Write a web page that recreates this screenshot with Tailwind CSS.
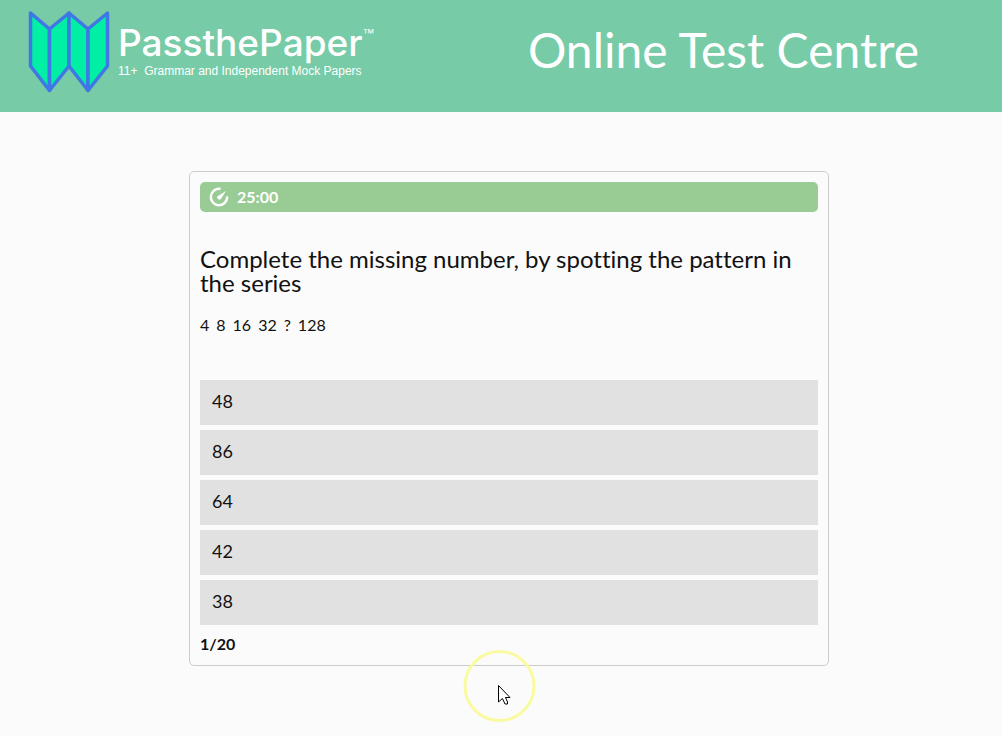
<!DOCTYPE html>
<html lang="en">
<head>
    <meta charset="UTF-8">
    <meta name="viewport" content="width=device-width, initial-scale=1.0">
    <title>PassthePaper - Online Test Centre</title>
    <script src="https://cdn.jsdelivr.net/npm/@tailwindcss/browser@4"></script>
</head>
<body class="relative min-h-screen bg-[#fbfbfb] font-['Lato',sans-serif] text-[#111] [font-variant-ligatures:none]">

    <header class="flex h-28 items-start justify-between bg-[#77cba7] pl-7 pr-[83px] text-white">
        <a href="#" class="flex items-start gap-2 pt-2.5">
            <svg class="h-[84px] w-[82px]" viewBox="0 0 82 84" fill="#00efa5" stroke="#3f78e4" stroke-width="3.500" stroke-linejoin="round" aria-hidden="true">
                <path d="M2.5 3 21.5 19V80.500L2.500 56Z"/>
                <path d="M21.500 19 41 3V56L21.500 80.500Z"/>
                <path d="M41 3 60 19V80.500L41 56Z"/>
                <path d="M60 19 79.500 3V56L60 80.500Z"/>
            </svg>
            <div class="pt-3">
                <div class="flex items-start">
                    <span class="font-['Inter',sans-serif] text-[37px]/[42px] font-medium">PassthePaper</span>
                    <span class="font-['Liberation_Sans',sans-serif] text-[12px]/[22px]">™</span>
                </div>
                <p class="font-['Liberation_Sans',sans-serif] text-[12px]/[14px]">11+&nbsp; Grammar and Independent Mock Papers</p>
            </div>
        </a>
        <h1 class="pt-[22px] text-[48px]/[56px]">Online Test Centre</h1>
    </header>

    <main class="pt-[59px] pl-4">
        <form class="mx-auto max-w-[640px] rounded-[5px] border border-[#ccc] p-2.5">
            <!-- Timer -->
            <div class="flex h-[30px] items-center gap-2 rounded-[5px] bg-[#99cc95] px-[9px] text-white">
                <svg class="size-5" viewBox="0 0 20 20" fill="none" stroke="currentColor" stroke-width="2.500" aria-hidden="true">
                    <path d="M11.500 2A8.200 8.200 0 1 0 18.200 9.500"/>
                    <path d="M17 4 11.900 12A2.300 2.300 0 0 1 8.200 9.600Z" fill="currentColor" stroke="none"/>
                </svg>
                <span class="text-base font-bold">25:00</span>
            </div>

            <h2 class="mt-[35px] text-2xl/6">Complete the missing number, by spotting the pattern in the series</h2>
            <p class="mt-[18px] flex gap-[7px] text-base">
                <span>4</span>
                <span>8</span>
                <span>16</span>
                <span>32</span>
                <span>?</span>
                <span>128</span>
            </p>

            <div class="mt-[43px] flex flex-col gap-[5px]">
                <button type="button" class="h-[45px] bg-[#e1e1e1] px-3 pb-1 text-left text-lg hover:bg-gray-300">48</button>
                <button type="button" class="h-[45px] bg-[#e1e1e1] px-3 pb-1 text-left text-lg hover:bg-gray-300">86</button>
                <button type="button" class="h-[45px] bg-[#e1e1e1] px-3 pb-1 text-left text-lg hover:bg-gray-300">64</button>
                <button type="button" class="h-[45px] bg-[#e1e1e1] px-3 pb-1 text-left text-lg hover:bg-gray-300">42</button>
                <button type="button" class="h-[45px] bg-[#e1e1e1] px-3 pb-1 text-left text-lg hover:bg-gray-300">38</button>
            </div>

            <p class="pt-2 text-base/[22px] font-bold">1/20</p>
        </form>
    </main>

    <!-- Highlighted pointer -->
    <svg class="pointer-events-none absolute top-[650px] left-[463px] size-[73px]" viewBox="0 0 73 73" aria-hidden="true">
        <circle cx="36.500" cy="36" r="34.500" fill="none" stroke="#fafaa0" stroke-width="3"/>
        <path d="M35.500 35.500V52L39.500 48.500 42 54H44.500V52L42.500 47.500H47Z" fill="#fff" stroke="#000"/>
    </svg>

</body>
</html>
